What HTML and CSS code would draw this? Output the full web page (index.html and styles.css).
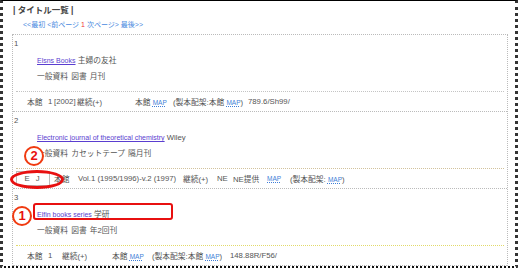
FILE: index.html
```html
<!DOCTYPE html>
<html lang="ja">
<head>
    <meta charset="UTF-8">
    <title>タイトル一覧</title>
    <link rel="stylesheet" href="styles.css">
</head>
<body>
    <div class="frame">
        <div class="page-title">| タイトル一覧 |</div>
        <div class="pager">
            <a href="#">&lt;&lt;最初</a> <a href="#">&lt;前ページ</a> <span class="current">1</span> <a href="#">次ページ&gt;</a> <a href="#">最後&gt;&gt;</a>
        </div>

        <div class="results">
            <div class="item">
                <div class="num">1</div>
                <div class="title"><a href="#">Elsns Books</a> 主婦の友社</div>
                <div class="info">一般資料 図書 月刊</div>
                <div class="holding h1">
                    <span class="mark"></span>
                    <span>本館</span>
                    <span>1</span>
                    <span>[2002]</span>
                    <span>継続(+)</span>
                    <span>本館 <a href="#" class="map">MAP</a></span>
                    <span>(製本配架:本館 <a href="#" class="map">MAP</a>)</span>
                    <span>789.6/Sh99/</span>
                </div>
            </div>

            <div class="item">
                <div class="num">2</div>
                <div class="title"><a href="#">Electronic journal of theoretical chemistry</a> Wiley</div>
                <div class="info">一般資料 カセットテープ 隔月刊</div>
                <div class="holding h2 tan">
                    <span><span class="ej">E J</span></span>
                    <span>本館</span>
                    <span>Vol.1 (1995/1996)-v.2 (1997)</span>
                    <span>継続(+)</span>
                    <span>NE</span>
                    <span>NE提供</span>
                    <span><a href="#" class="map">MAP</a></span>
                    <span>(製本配架: <a href="#" class="map">MAP</a>)</span>
                </div>
            </div>

            <div class="item">
                <div class="num">3</div>
                <div class="title"><a href="#">Elfin books series</a> 学研</div>
                <div class="info">一般資料 図書 年2回刊</div>
                <div class="holding h3 yellow">
                    <span class="mark"></span>
                    <span>本館</span>
                    <span>1</span>
                    <span>継続(+)</span>
                    <span>本館 <a href="#" class="map">MAP</a></span>
                    <span>(製本配架:本館 <a href="#" class="map">MAP</a>)</span>
                    <span>148.88R/F56/</span>
                </div>
            </div>
        </div>

        <!-- annotations drawn over the screenshot -->
        <div class="note-box"></div>
        <div class="note-oval"></div>
        <div class="note-num one">1</div>
        <div class="note-num two">2</div>
    </div>
</body>
</html>
```

FILE: styles.css
```css
body {
    margin: 0;
    font-family: "Liberation Sans", "Noto Sans CJK JP", sans-serif;
    font-size: 7.75px;
    color: #555;
    background-color: #fff;
}
.frame {
    position: relative;
    height: 268px;
    box-sizing: border-box;
    border-top: 1px solid #000;
    border-left: 3px dotted #333;
    border-right: 3px dotted #333;
    border-bottom: 2px dotted #111;
    overflow: hidden;
}
.page-title {
    padding: 1px 0 0 10px;
    line-height: 16px;
    font-size: 8.5px;
    font-weight: bold;
    color: #444;
}
.pager {
    padding-left: 20px;
    line-height: 14px;
    font-size: 7px;
}
.pager a {
    color: #4a8ae0;
    text-decoration: none;
}
.pager .current {
    color: #e33;
}
.results {
    margin: 2px 7px 0 9px;
    border: 1px dotted #bbb;
    border-bottom: none;
}
.item {
    border-bottom: 1px dotted #bbb;
}
.num {
    height: 17px;
    line-height: 17px;
    padding-left: 1px;
}
.title,
.info {
    padding-left: 24px;
    white-space: nowrap;
}
.title {
    line-height: 17px;
}
.title a {
    font-size: 7px;
    color: #5a3ed0;
}
.info {
    line-height: 16px;
    word-spacing: 1px;
}
.holding {
    margin: 6px 3px 0;
    border-top: 1px dotted #c4c4c4;
    height: 19px;
    display: grid;
    align-items: center;
    white-space: nowrap;
}
.holding.tan {
    border-top-color: #d2c29c;
}
.holding.yellow {
    border-top-color: #e2da6a;
}
.h1 {
    grid-template-columns: 11px 21px 6px 23px 58px 38px 75px auto;
}
.h2 {
    grid-template-columns: 38px 24px 105px 34px 16px 34px 23px auto;
}
.h3 {
    grid-template-columns: 11px 21px 14px 50px 40px 78px auto;
}
.ej {
    display: block;
    width: 34px;
    height: 15px;
    box-sizing: border-box;
    border: 1px solid #bbb;
    text-align: center;
    line-height: 13px;
    letter-spacing: 2px;
}
.map {
    color: #3f7fd8;
    font-size: 6.5px;
    text-decoration: underline dotted;
}
.note-box {
    position: absolute;
    left: 30px;
    top: 202px;
    width: 140px;
    height: 17px;
    box-sizing: border-box;
    border: 2px solid #e81010;
    border-radius: 3px;
}
.note-oval {
    position: absolute;
    left: 7px;
    top: 169px;
    width: 54px;
    height: 19px;
    box-sizing: border-box;
    border: 3px solid #e81010;
    border-radius: 50%;
}
.note-num {
    position: absolute;
    width: 20px;
    height: 20px;
    box-sizing: border-box;
    border: 2px solid #f03a10;
    border-radius: 50%;
    background-color: #fff;
    color: #e81010;
    font-size: 13px;
    font-weight: bold;
    line-height: 16px;
    text-align: center;
}
.note-num.one {
    left: 9px;
    top: 205px;
}
.note-num.two {
    left: 21px;
    top: 145px;
}
```
